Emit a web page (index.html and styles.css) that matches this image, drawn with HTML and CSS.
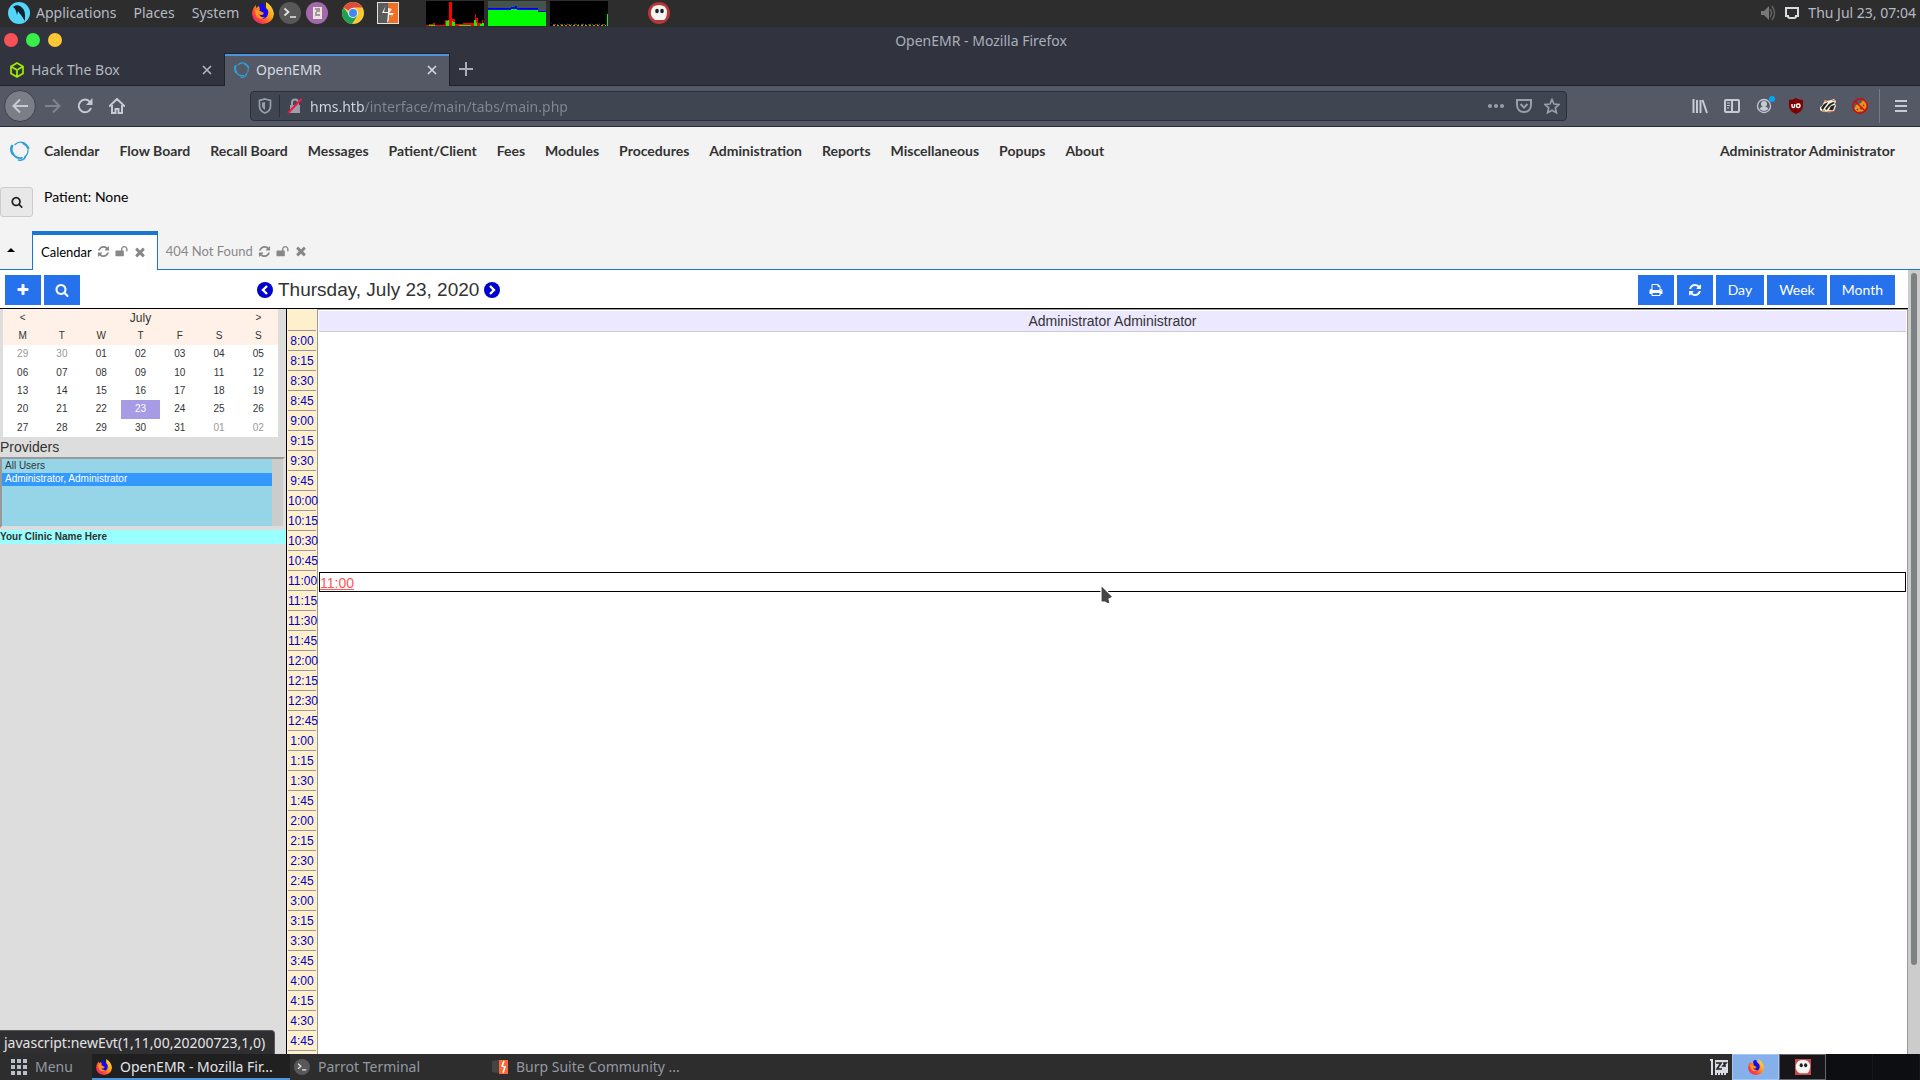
FILE: index.html
```html
<!DOCTYPE html>
<html lang="en">
<head>
<meta charset="utf-8">
<title>OpenEMR</title>
<link rel="stylesheet" href="styles.css">
</head>
<body>
<svg class="defs" aria-hidden="true">
  <symbol id="refresh" viewBox="0 0 1792 1792"><path d="M1639 1056q0 5-1 7-64 268-268 434.500t-478 166.500q-146 0-282.500-55t-243.500-157l-129 129q-19 19-45 19t-45-19-19-45v-448q0-26 19-45t45-19h448q26 0 45 19t19 45-19 45l-137 137q71 66 161 102t187 36q134 0 250-65t186-179q11-17 53-117 8-23 30-23h192q13 0 22.500 9.500t9.500 22.500zm25-800v448q0 26-19 45t-45 19h-448q-26 0-45-19t-19-45 19-45l138-138q-148-137-349-137-134 0-250 65t-186 179q-11 17-53 117-8 23-30 23h-199q-13 0-22.500-9.500t-9.500-22.500v-7q65-268 270-434.500t480-166.500q146 0 284 55.500t245 156.500l130-129q19-19 45-19t45 19 19 45z"/></symbol>
  <symbol id="search" viewBox="0 0 1792 1792"><path d="M1216 832q0-185-131.500-316.500t-316.500-131.500-316.500 131.500-131.500 316.500 131.500 316.500 316.500 131.500 316.500-131.500 131.500-316.500zm512 832q0 52-38 90t-90 38q-54 0-90-38l-343-342q-179 124-399 124-143 0-273.500-55.500t-225-150-150-225-55.500-273.500 55.500-273.500 150-225 225-150 273.500-55.500 273.500 55.500 225 150 150 225 55.500 273.500q0 220-124 399l343 343q37 37 37 90z"/></symbol>
  <symbol id="plus" viewBox="0 0 1792 1792"><path d="M1600 736v192q0 40-28 68t-68 28h-416v416q0 40-28 68t-68 28h-192q-40 0-68-28t-28-68v-416h-416q-40 0-68-28t-28-68v-192q0-40 28-68t68-28h416v-416q0-40 28-68t68-28h192q40 0 68 28t28 68v416h416q40 0 68 28t28 68z"/></symbol>
  <symbol id="times" viewBox="0 0 1792 1792"><path d="M1490 1322q0 40-28 68l-136 136q-28 28-68 28t-68-28l-294-294-294 294q-28 28-68 28t-68-28l-136-136q-28-28-28-68t28-68l294-294-294-294q-28-28-28-68t28-68l136-136q28-28 68-28t68 28l294 294 294-294q28-28 68-28t68 28l136 136q28 28 28 68t-28 68l-294 294 294 294q28 28 28 68z"/></symbol>
  <symbol id="print" viewBox="0 0 1792 1792"><path d="M448 1536h896v-256h-896v256zm0-640h896v-384h-160q-40 0-68-28t-28-68v-160h-640v640zm1152 64q0-26-19-45t-45-19-45 19-19 45 19 45 45 19 45-19 19-45zm128 0v416q0 13-9.500 22.500t-22.500 9.500h-224v160q0 40-28 68t-68 28h-960q-40 0-68-28t-28-68v-160h-224q-13 0-22.500-9.500t-9.500-22.500v-416q0-79 56.500-135.500t135.500-56.500h64v-544q0-40 28-68t68-28h672q40 0 88 20t76 48l152 152q28 28 48 76t20 88v256h64q79 0 135.500 56.500t56.500 135.500z"/></symbol>
  <symbol id="unlock" viewBox="0 0 1792 1792"><path d="M1728 576v256q0 26-19 45t-45 19h-64q-26 0-45-19t-19-45v-256q0-106-75-181t-181-75-181 75-75 181v192h96q40 0 68 28t28 68v576q0 40-28 68t-68 28h-960q-40 0-68-28t-28-68v-576q0-40 28-68t68-28h672v-192q0-185 131.500-316.500t316.500-131.500 316.500 131.500 131.500 316.500z"/></symbol>
  <symbol id="close" viewBox="0 0 10 10"><path d="M1 1l8 8M9 1l-8 8" stroke="currentColor" stroke-width="1.600" fill="none"/></symbol>
  <symbol id="emr" viewBox="0 0 20 20"><g fill="none" stroke="#2f9fd8" stroke-linecap="round"><path d="M5 3.500A8 8 0 0 1 14 2" stroke-width="1.400"/><path d="M13.500 2.300A8 8 0 0 1 18.200 7" stroke-width="2.400"/><path d="M18 8.500A8.500 8.500 0 0 1 14.500 16" stroke-width="1.200"/><path d="M2 5A8.500 8.500 0 0 0 2.800 13" stroke-width="2.600"/><path d="M2.800 12.500A8.500 8.500 0 0 0 12 16.800" stroke-width="1.800"/><path d="M8.500 19Q13.500 20 15.500 16" stroke-width="1.600"/></g></symbol>
  <symbol id="firefox" viewBox="0 0 22 22"><defs><linearGradient id="fx" x1="1" y1="0" x2="0" y2="1"><stop offset="0" stop-color="#fff44f"/><stop offset=".4" stop-color="#ffa018"/><stop offset=".72" stop-color="#ff3e3e"/><stop offset="1" stop-color="#d815b0"/></linearGradient></defs><path d="M14 0Q21 4 22 12Q21 21 11 22Q1 21 0 12Q0 7 4 3V6L7 4Q11 4 14 9Z" fill="url(#fx)"/><path d="M7 4Q8 0 12 2Q11 5 14 6Q17 8 16 12Q15 16 11 17Q6 16 6 13Q9 14 12 12L7 11Q5 9 8 8Z" fill="#1508ef"/><path d="M3 8Q6 7 8 9L12 11Q9 14 6 11Q8 16 13 15Q9 19 5 15Q3 12 3 8Z" fill="#ff9b18"/></symbol>
  <symbol id="terminal" viewBox="0 0 22 22"><circle cx="11" cy="11" r="11" fill="#585858"/><path d="M5.500 6.500l4 3.500-4 3.500M11 15h6" fill="none" stroke="#e6e6e6" stroke-width="1.700"/></symbol>
  <symbol id="skull" viewBox="0 0 24 24"><path d="M4 10Q5 4 12 4Q19 4 20 10Q20 17 17 19H8Q3 16 4 10Z" fill="#f4f4f2"/><ellipse cx="10" cy="10" rx="1.800" ry="2.200" fill="#222"/><ellipse cx="15" cy="10" rx="1.800" ry="2.200" fill="#222"/></symbol>
</svg>

<header class="panel">
  <button class="panel-item menu-apps"><svg width="22" height="22" viewBox="0 0 22 22"><circle cx="11" cy="11" r="11" fill="#55d4fa"/><path d="M5 5Q8 2 12 4Q17 7 17 13L17 19L13 13Q11 11 10 9L9 13L8 9Q7 6 5 5Z" fill="#10202a"/></svg>Applications</button>
  <button class="panel-item">Places</button>
  <button class="panel-item">System</button>
  <div class="launchers">
    <button aria-label="Firefox"><svg width="22" height="22"><use href="#firefox"/></svg></button>
    <button aria-label="Terminal"><svg width="22" height="22"><use href="#terminal"/></svg></button>
    <button aria-label="Text editor"><svg width="22" height="22" viewBox="0 0 22 22"><circle cx="11" cy="11" r="11" fill="#a468ae"/><path d="M7 5h9v12H7z" fill="#e9e4da"/><path d="M9 7h5M10 9h4M9 11h2M9 13h5" stroke="#8d7b8f" stroke-width="1.400"/></svg></button>
  </div>
  <div class="launchers launchers-wide">
    <button aria-label="Chrome"><svg width="22" height="22" viewBox="0 0 22 22"><circle cx="11" cy="11" r="11" fill="#fcc934"/><path d="M11 11L1.500 5.500A11 11 0 0 1 20.500 5.500H11Z" fill="#dd4b3e"/><path d="M1.500 5.500A11 11 0 0 0 10 22L15.500 13.500L7 13Z" fill="#1ba05a"/><circle cx="11" cy="11" r="5" fill="#eee"/><circle cx="11" cy="11" r="4" fill="#4486f4"/></svg></button>
    <button aria-label="Burp Suite"><svg width="22" height="22" viewBox="0 0 22 22"><path d="M0 0h22v22H0z" fill="#e8e2dc"/><path d="M1 1h10v20H1z" fill="#585c5f"/><path d="M11 1h10v20H11z" fill="#ee6f28"/><path d="M10 1L5 11H11L10 21L17 11H12L15 7L11 6V1Z" fill="#fff1e8"/><path d="M9 1L7 10H11V1Z" fill="#585c5f"/><path d="M12 21V13H15L12 21Z" fill="#ee6f28"/></svg></button>
  </div>
  <div class="monitors">
    <svg width="58" height="25" viewBox="0 0 58 25"><path fill="#000" d="M0 0h58v25H0z"/><path fill="#f00" d="M0 24h3v-1h4v-1h2v2h10v-5h4V1h3v17h3v5h8v-1h12v-9h1v4h2v5h4v-3h1v6H0z"/><path fill="#0f0" d="M3 25v-1h6v1zM20 25v-5h2v-1h1v6zM26 25v-5h1v1h2v4zM33 25v-1h12v1zM48 25v-6h2v3h1v3zM54 25v-2h2v-1h2v3z"/></svg>
    <svg width="58" height="25" viewBox="0 0 58 25"><path fill="#44544c" d="M0 0h58v25H0z"/><path fill="#00f" d="M0 7h23v-1h4v-1h2v2h21v3h8v2H0z"/><path fill="#0f0" d="M0 9h23v-1h6v1h21v2h8v14H0z"/></svg>
    <svg width="58" height="25" viewBox="0 0 58 25"><path fill="#000" d="M0 0h58v25H0z"/><path stroke="#f00" stroke-dasharray="3 1 1 2" d="M3 23.500h53"/><path stroke="#00f" stroke-dasharray="1 7" d="M1 22.500h56"/><path stroke="#0f0" stroke-dasharray="2 2" d="M3 24.500h53"/><path fill="#0f0" d="M57 13h1v12h-1z"/></svg>
  </div>
  <button class="indicator" aria-label="Skull indicator"><svg width="24" height="24" viewBox="0 0 24 24"><circle cx="12" cy="12" r="11" fill="#b83636"/><use href="#skull"/></svg></button>
  <div class="tray">
    <svg width="16" height="16" viewBox="0 0 16 16"><path d="M1 6h3l5-5v14l-5-5H1z" fill="#777"/><path d="M10 4q3 4 0 8M12 1q5 7 0 14" fill="none" stroke="#626262" stroke-width="1.500"/></svg>
    <svg width="16" height="14" viewBox="0 0 16 14"><path d="M2 2h12v8h-2q0 2-2 2H6q-2 0-2-2H2z" fill="none" stroke="#d6dce2" stroke-width="2"/></svg>
    <time>Thu Jul 23, 07:04</time>
  </div>
</header>

<section class="window">
  <div class="titlebar">
    <div class="lights"><button class="light red" aria-label="Close"></button><button class="light green" aria-label="Maximize"></button><button class="light yellow" aria-label="Minimize"></button></div>
    <div class="window-title">OpenEMR - Mozilla Firefox</div>
  </div>
  <div class="browser-tabs">
    <div class="btab">
      <svg width="16" height="16" viewBox="0 0 16 16"><path d="M8 1l6 3.500v7L8 15l-6-3.500v-7zM2 4.500L8 8l6-3.500M8 8v7" fill="none" stroke="#9fef00" stroke-width="1.700" stroke-linejoin="round"/></svg>
      <span>Hack The Box</span>
      <button aria-label="Close tab"><svg width="10" height="10"><use href="#close"/></svg></button>
    </div>
    <div class="btab btab-active">
      <svg width="16" height="16"><use href="#emr"/></svg>
      <span>OpenEMR</span>
      <button aria-label="Close tab"><svg width="10" height="10"><use href="#close"/></svg></button>
    </div>
    <button class="new-tab" aria-label="New tab"><svg width="14" height="14" viewBox="0 0 14 14"><path d="M7 0v14M0 7h14" stroke="currentColor" stroke-width="2"/></svg></button>
  </div>
  <nav class="toolbar">
    <button class="back" aria-label="Back"><svg width="16" height="16" viewBox="0 0 16 16"><path d="M16 8H1M8 1.500L1.500 8L8 14.500" fill="none" stroke="currentColor" stroke-width="2"/></svg></button>
    <button class="tool dim" aria-label="Forward"><svg width="16" height="16" viewBox="0 0 16 16"><path d="M0 8h15M8 1.500L14.500 8L8 14.500" fill="none" stroke="currentColor" stroke-width="2"/></svg></button>
    <button class="tool" aria-label="Reload"><svg width="16" height="16" viewBox="0 0 16 16"><path d="M13 4A6.300 6.300 0 1 0 14 10" fill="none" stroke="currentColor" stroke-width="2"/><path d="M15.500 0v7H9z" fill="currentColor"/></svg></button>
    <button class="tool" aria-label="Home"><svg width="16" height="16" viewBox="0 0 16 16"><path d="M0 8.500L8 1l8 7.500M3 7v8h3.500v-4h3v4H13V7" fill="none" stroke="currentColor" stroke-width="2"/></svg></button>
    <div class="urlbar">
      <svg width="14" height="16" viewBox="0 0 14 16"><path d="M7 1l5.500 1.500V8q0 5-5.500 7q-5.500-2-5.500-7V2.500z" fill="none" stroke="currentColor" stroke-width="1.700"/><path d="M7 4v8q-3-1.500-3-4V4.800z" fill="currentColor"/></svg>
      <i class="url-sep"></i>
      <svg width="16" height="16" viewBox="0 0 16 16"><path d="M3 7h10v8H3z" fill="currentColor"/><path d="M5 8V4.500q0-3 3-3t3 3V8" fill="none" stroke="currentColor" stroke-width="2"/><path d="M1 15L14.500 1" stroke="#f5163f" stroke-width="2"/></svg>
      <input class="url" aria-label="Address" value="hms.htb/interface/main/tabs/main.php">
      <div class="url-actions">
        <svg width="16" height="16" viewBox="0 0 16 16"><g fill="currentColor"><circle cx="2" cy="8" r="2"/><circle cx="8" cy="8" r="2"/><circle cx="14" cy="8" r="2"/></g></svg>
        <svg width="16" height="16" viewBox="0 0 16 16"><path d="M1 2h14v5q-.5 7-7 7T1 7zM4.500 6L8 9.500L11.500 6" fill="none" stroke="currentColor" stroke-width="2"/></svg>
        <svg width="16" height="16" viewBox="0 0 16 16"><path d="M8 1.500l2 4.500 5 .5-3.700 3.300 1.100 4.900L8 12.200l-4.400 2.500 1.100-4.900L1 6.500 6 6z" fill="none" stroke="currentColor" stroke-width="1.700"/></svg>
      </div>
    </div>
    <div class="extensions">
      <svg width="16" height="16" viewBox="0 0 16 16"><path d="M1.500 1v14M5 2v13M8.500 2v13M10.500 2l4.500 13" stroke="currentColor" stroke-width="2" fill="none"/></svg>
      <svg width="16" height="16" viewBox="0 0 16 16"><rect x="1" y="2" width="14" height="12" rx="1" fill="none" stroke="currentColor" stroke-width="2"/><path d="M8 2v12" stroke="currentColor" stroke-width="2"/><path d="M3 5h3M3 7.500h3M3 10h2" stroke="currentColor" stroke-width="1.200"/></svg>
      <svg class="account" width="20" height="20" viewBox="0 0 20 20"><circle cx="8" cy="12" r="6.500" fill="none" stroke="currentColor" stroke-width="1.300"/><circle cx="8" cy="10" r="3" fill="currentColor"/><path d="M3.500 15q1-2.500 4.500-2.500t4.500 2.500q-4.500 4-9 0z" fill="currentColor"/><circle cx="16" cy="5" r="3" fill="#00a8f3"/></svg>
      <svg width="16" height="16" viewBox="0 0 16 16"><path d="M8 0q3 2 7 2v6q0 5-7 8q-7-3-7-8V2q4 0 7-2z" fill="#800000"/><path d="M4 6v2q0 1.500 1.300 1.500T6.600 8V6" fill="none" stroke="#fff" stroke-width="1.400"/><rect x="8.500" y="6" width="3.500" height="3.500" rx="1.500" fill="none" stroke="#fff" stroke-width="1.400"/></svg>
      <svg width="16" height="16" viewBox="0 0 16 16"><path d="M0 9L2 8L4 4L5 2L7 3L11 2L14 1L16 3L15 6L16 8L14 13L3 14L0 12Z" fill="#f3eee2"/><path d="M1 10L4 6L8 4L7 6L4 10L3 12ZM5 11L9 6L13 4L15 5L11 7L8 10L7 12ZM9 12l2-4 4-1-2 5z" fill="#222"/><path d="M4 3l3 0M12 2l3 1M2 13h3M8 14l5-1" stroke="#e27e35" stroke-width="1.300"/></svg>
      <svg width="16" height="16" viewBox="0 0 16 16"><path d="M2 11L4 7L9 5L11 2L14 4L15 9L12 13L5 14Z" fill="#f0901c"/><path d="M5 11l1 1M11 7l1 1M8 10l2 1" stroke="#7a3810" stroke-width="1.500"/><circle cx="8" cy="8" r="7.200" fill="none" stroke="#d10909" stroke-width="1.400"/><path d="M3 3l10 10" stroke="#d10909" stroke-width="1.400"/></svg>
    </div>
    <button class="burger" aria-label="Open menu"><svg width="12" height="12" viewBox="0 0 12 12"><path d="M0 1h12M0 6h12M0 11h12" stroke="currentColor" stroke-width="2"/></svg></button>
  </nav>

  <div class="page">
    <div class="emr-head">
      <nav class="emr-menu">
        <a href="#" class="emr-logo" aria-label="OpenEMR"><svg width="20" height="20"><use href="#emr"/></svg></a>
        <a href="#">Calendar</a><a href="#">Flow Board</a><a href="#">Recall Board</a><a href="#">Messages</a><a href="#">Patient/Client</a><a href="#">Fees</a><a href="#">Modules</a><a href="#">Procedures</a><a href="#">Administration</a><a href="#">Reports</a><a href="#">Miscellaneous</a><a href="#">Popups</a><a href="#">About</a>
        <a href="#" class="user">Administrator Administrator</a>
      </nav>
      <div class="patient-row">
        <button class="find" aria-label="Find patient"><svg width="12" height="12"><use href="#search"/></svg></button>
        <span>Patient: None</span>
      </div>
      <div class="emr-tabs">
        <button class="caret" aria-label="Collapse"></button>
        <div class="etab etab-active"><span>Calendar</span><svg width="13" height="13"><use href="#refresh"/></svg><svg width="13" height="13"><use href="#unlock"/></svg><svg width="14" height="14"><use href="#times"/></svg></div>
        <div class="etab"><span>404 Not Found</span><svg width="13" height="13"><use href="#refresh"/></svg><svg width="13" height="13"><use href="#unlock"/></svg><svg width="14" height="14"><use href="#times"/></svg></div>
      </div>
    </div>

    <div class="frame">
      <main class="calendar">
        <div class="cal-bar">
          <div class="cal-left">
            <button class="btn btn-icon" aria-label="Add"><svg width="14" height="14"><use href="#plus"/></svg></button>
            <button class="btn btn-icon" aria-label="Search"><svg width="14" height="14"><use href="#search"/></svg></button>
          </div>
          <div class="cal-date">
            <a href="#" aria-label="Previous day"><svg width="16" height="16" viewBox="0 0 16 16"><circle cx="8" cy="8" r="8" fill="#0000cc"/><path d="M10 4L6 8l4 4" fill="none" stroke="#fff" stroke-width="2.400"/></svg></a>
            <span>Thursday, July 23, 2020</span>
            <a href="#" aria-label="Next day"><svg width="16" height="16" viewBox="0 0 16 16"><circle cx="8" cy="8" r="8" fill="#0000cc"/><path d="M6 4l4 4-4 4" fill="none" stroke="#fff" stroke-width="2.400"/></svg></a>
          </div>
          <div class="cal-views">
            <button class="btn btn-icon" aria-label="Print"><svg width="14" height="14"><use href="#print"/></svg></button>
            <button class="btn btn-icon" aria-label="Refresh"><svg width="14" height="14"><use href="#refresh"/></svg></button>
            <button class="btn">Day</button><button class="btn">Week</button><button class="btn">Month</button>
          </div>
        </div>
        <div class="cal-body">
          <aside class="side">
            <table class="mini">
              <thead>
                <tr><th><a href="#">&lt;</a></th><th colspan="5" class="month">July</th><th><a href="#">&gt;</a></th></tr>
                <tr><th>M</th><th>T</th><th>W</th><th>T</th><th>F</th><th>S</th><th>S</th></tr>
              </thead>
              <tbody>
                <tr><td class="off">29</td><td class="off">30</td><td>01</td><td>02</td><td>03</td><td>04</td><td>05</td></tr>
                <tr><td>06</td><td>07</td><td>08</td><td>09</td><td>10</td><td>11</td><td>12</td></tr>
                <tr><td>13</td><td>14</td><td>15</td><td>16</td><td>17</td><td>18</td><td>19</td></tr>
                <tr><td>20</td><td>21</td><td>22</td><td class="today">23</td><td>24</td><td>25</td><td>26</td></tr>
                <tr><td>27</td><td>28</td><td>29</td><td>30</td><td>31</td><td class="off">01</td><td class="off">02</td></tr>
              </tbody>
            </table>
            <label class="providers-label" for="providers">Providers</label>
            <select id="providers" class="providers" multiple size="5"><option>All Users</option><option selected>Administrator, Administrator</option></select>
            <div class="clinic">Your Clinic Name Here</div>
          </aside>
          <div class="times">
            <div class="times-head"></div>
            <a href="#">8:00</a><a href="#">8:15</a><a href="#">8:30</a><a href="#">8:45</a>
            <a href="#">9:00</a><a href="#">9:15</a><a href="#">9:30</a><a href="#">9:45</a>
            <a href="#">10:00</a><a href="#">10:15</a><a href="#">10:30</a><a href="#">10:45</a>
            <a href="#">11:00</a><a href="#">11:15</a><a href="#">11:30</a><a href="#">11:45</a>
            <a href="#">12:00</a><a href="#">12:15</a><a href="#">12:30</a><a href="#">12:45</a>
            <a href="#">1:00</a><a href="#">1:15</a><a href="#">1:30</a><a href="#">1:45</a>
            <a href="#">2:00</a><a href="#">2:15</a><a href="#">2:30</a><a href="#">2:45</a>
            <a href="#">3:00</a><a href="#">3:15</a><a href="#">3:30</a><a href="#">3:45</a>
            <a href="#">4:00</a><a href="#">4:15</a><a href="#">4:30</a><a href="#">4:45</a>
          </div>
          <div class="day">
            <div class="day-head">Administrator Administrator</div>
            <div class="day-slots"><a href="#" class="slot">11:00</a></div>
          </div>
        </div>
      </main>
      <div class="scrollbar"><div class="thumb"></div></div>
    </div>
    <div class="status">javascript:newEvt(1,11,00,20200723,1,0)</div>
  </div>
</section>

<footer class="taskbar">
  <button class="start"><svg width="16" height="16" viewBox="0 0 16 16"><path d="M0 2h16M0 8h16M0 14h16" stroke="#b9bec8" stroke-width="4" stroke-dasharray="4 2"/></svg>Menu</button>
  <button class="task task-active"><svg width="16" height="16"><use href="#firefox"/></svg><span>OpenEMR - Mozilla Fir...</span></button>
  <button class="task"><svg width="16" height="16"><use href="#terminal"/></svg><span>Parrot Terminal</span></button>
  <button class="task"><svg width="16" height="16" viewBox="0 0 16 16"><path d="M0 2l7-1v13l-7-1z" fill="#444"/><path d="M7 1h9v14H7z" fill="#ff6633"/><path d="M12 2l-2 5 3 1-2 6" fill="none" stroke="#fff" stroke-width="1.600"/></svg><span>Burp Suite Community ...</span></button>
  <div class="workspaces">
    <svg class="zz" width="18" height="16" viewBox="0 0 18 16"><path d="M0 0h3v16H1V2H0zM5 1h13v13h-2v2h-2v-2h-1v2h-2v-2h-1v2H8v-2H7v2H5z" fill="#d9dce4"/><path d="M6 4h5l-4 6h5M13 4h3l-3 3h3" fill="none" stroke="#222" stroke-width="1.600"/></svg>
    <button class="ws ws-current" aria-label="Workspace 1"><svg width="16" height="16"><use href="#firefox"/></svg></button>
    <button class="ws ws-window" aria-label="Workspace 2"><svg width="16" height="16" viewBox="3 3 18 18"><path d="M3 3h18v18H3z" fill="#c94a4a"/><use href="#skull" width="24" height="24"/></svg></button>
    <button class="ws" aria-label="Workspace 3"></button>
    <button class="ws" aria-label="Workspace 4"></button>
  </div>
</footer>
<svg class="pointer" width="14" height="22" viewBox="0 0 14 22"><path d="M1 1v17h4l3 2 2-1-1-4 4-2z" fill="#444" stroke="#fff" stroke-width="1.200"/></svg>
</body>
</html>
```
FILE: styles.css
```css
* { box-sizing: border-box; }
body {
  margin: 0;
  height: 100vh;
  display: flex;
  flex-direction: column;
  overflow: hidden;
  position: relative;
  font-family: "Noto Sans", sans-serif;
  font-size: 14px;
  line-height: 20px;
  color: #b5bac4;
  background: #2d2d2d;
}
button {
  margin: 0;
  padding: 0;
  border: 0;
  background: none;
  color: inherit;
  font: inherit;
}
a { color: inherit; text-decoration: none; }
svg { display: block; flex: none; fill: currentColor; }
.defs { position: absolute; width: 0; height: 0; }

/* Desktop panel */
.panel {
  flex: none;
  height: 27px;
  display: flex;
  align-items: center;
  padding: 0 4px 1px 8px;
  background: #2d2d2d;
}
.panel-item { margin-right: 17px; }
.menu-apps { display: flex; align-items: center; gap: 6px; }
.launchers { display: flex; gap: 5px; margin-left: -4px; }
.launchers-wide { gap: 13px; margin-left: 14px; }
.monitors { display: flex; gap: 4px; margin-left: 27px; }
.indicator { margin-left: 39px; }
.tray { display: flex; align-items: center; gap: 8px; margin-left: auto; }

/* Browser window */
.window {
  flex: 1;
  min-height: 0;
  display: flex;
  flex-direction: column;
  background: #31343f;
}
.titlebar { flex: none; height: 26px; display: flex; align-items: center; }
.lights { display: flex; gap: 8px; padding-left: 4px; }
.light { width: 14px; height: 14px; border-radius: 50%; }
.red { background: #fa5057; }
.green { background: #38ef49; }
.yellow { background: #fdc636; }
.window-title { flex: 1; padding: 2px 20px 0 0; text-align: center; color: #a9afba; }
.browser-tabs {
  flex: none;
  height: 33px;
  display: flex;
  border-bottom: 1px solid #20222b;
  color: #b1b6c0;
}
.btab {
  width: 224px;
  display: flex;
  align-items: center;
  gap: 6px;
  padding: 2px 12px 0 9px;
}
.btab button { margin-left: auto; }
.btab-active {
  width: 226px;
  height: 33px;
  border: 1px solid #20222b;
  border-width: 1px 1px 0;
  padding-top: 0;
  background: #555965;
  box-shadow: inset 0 2px #4f94e0;
  color: #d6d9e0;
}
.new-tab { margin-left: 9px; color: #a9b0bc; }
.toolbar {
  flex: none;
  height: 41px;
  display: flex;
  align-items: center;
  padding: 0 13px 0 4px;
  border-bottom: 1px solid #292b38;
  background: #555965;
  color: #c6cad4;
}
.back {
  width: 32px;
  height: 32px;
  display: grid;
  place-items: center;
  border: 1px solid #3c404c;
  border-radius: 50%;
  background: #7b7e87;
}
.tool { margin-left: 16px; }
.back + .tool { margin-left: 9px; }
.dim { color: #80848f; }
.urlbar {
  flex: 1;
  height: 30px;
  display: flex;
  align-items: center;
  gap: 7px;
  margin-left: 125px;
  padding: 0 6px 0 7px;
  border: 1px solid #2c2e3b;
  border-radius: 4px;
  background: #404552;
  color: #9a9fac;
}
.url-sep { width: 1px; height: 22px; background: #2c2e3b; }
.url {
  flex: 1;
  height: 24px;
  padding: 0;
  border: 0;
  font: inherit;
  color: transparent;
  background: linear-gradient(90deg, #d6dae3 54px, #828794 54px);
  background-clip: text;
}
.url-actions { display: flex; gap: 12px; }
.extensions { display: flex; align-items: center; gap: 16px; margin-left: 125px; }
.account { width: 20px; margin: -4px -4px 0 0; }
.burger {
  height: 34px;
  margin-left: 11px;
  padding-left: 15px;
  border-left: 1px solid #777b86;
}

/* OpenEMR */
.page {
  flex: 1;
  min-height: 0;
  display: flex;
  flex-direction: column;
  position: relative;
  background: #fff;
  color: #333;
}
.emr-head {
  flex: none;
  background: #f3f3f3;
  border-bottom: 1px solid #1976d2;
  font-family: Lato, sans-serif;
}
.emr-menu {
  height: 60px;
  display: flex;
  align-items: center;
  gap: 20px;
  padding: 0 25px 12px 10px;
  font-weight: 700;
}
.emr-logo { margin-right: -6px; }
.user { margin-left: auto; }
.patient-row { height: 44px; display: flex; gap: 11px; color: #000; }
.find {
  width: 33px;
  height: 30px;
  display: grid;
  place-items: center;
  border: 1px solid #ccc;
  border-radius: 3px;
  background: #e8e8e8;
  color: #222;
}
.emr-tabs { display: flex; height: 38px; font-size: 13px; }
.caret { width: 32px; }
.caret::before {
  content: "";
  display: block;
  width: 0;
  margin-left: 7px;
  border: 4px solid transparent;
  border-top: 0;
  border-bottom-color: #000;
}
.etab {
  display: flex;
  align-items: center;
  gap: 5px;
  padding: 2px 10px 0 8px;
  color: #888;
}
.etab-active {
  height: 39px;
  border: 1px solid #1976d2;
  border-width: 4px 1px 0;
  padding: 0 10px 2px 8px;
  background: #fff;
}
.etab-active span { color: #000; }

.frame { flex: 1; min-height: 0; display: flex; }
.scrollbar { width: 12px; padding: 3px; background: #ccc; }
.thumb { height: 89%; border-radius: 3px; background: #7e8181; }
.calendar {
  flex: 1;
  min-width: 0;
  display: flex;
  flex-direction: column;
  font-family: "Liberation Sans", sans-serif;
}
.cal-bar {
  flex: none;
  height: 39px;
  display: flex;
  align-items: center;
  padding: 1px 13px 0 5px;
  border-bottom: 1px solid #000;
}
.cal-left, .cal-views { display: flex; gap: 3px; }
.cal-left { width: 252px; }
.cal-views { margin-left: auto; }
.btn {
  height: 30px;
  padding: 0 12px;
  background: #2672ec;
  color: #fff;
  font-family: Lato, sans-serif;
}
.btn-icon { padding: 0 11px; }
.cal-date { display: flex; align-items: center; gap: 5px; font-size: 19px; }
.cal-body { flex: 1; min-height: 0; display: flex; overflow: hidden; }
.side {
  width: 287px;
  border-right: 1px solid #000;
  background: #ddd;
  font-size: 10px;
}
.mini {
  width: 275px;
  height: 128px;
  margin-left: 3px;
  table-layout: fixed;
  border-collapse: collapse;
  background: #fff;
  text-align: center;
  line-height: 18px;
}
.mini thead { background: #fff1e8; }
.mini th { padding: 0; font-weight: 400; }
.mini td { padding: 0; }
.mini .month { font-size: 12px; }
.off { color: #999; }
.today { background: #a79be6; color: #fff; }
.providers-label { display: block; font-size: 14px; line-height: 20px; }
.providers {
  display: block;
  width: 285px;
  height: 71px;
  padding: 1px 0 0;
  border: 2px solid #ddd;
  border-color: #999 #ddd #ddd #999;
  border-radius: 0;
  background: linear-gradient(270deg, #ccc 11px, #95d5e7 11px);
  color: #333;
  font: 10px "Liberation Sans", sans-serif;
  overflow: hidden;
  outline: 0;
}
.providers option { margin-right: 11px; min-height: 13px; padding: 0 3px; line-height: 13px; }
.providers option:checked { background: #3399ff linear-gradient(#3399ff, #3399ff); color: #fff; }
.clinic { margin-top: 2px; background: #9ff; font-weight: 700; line-height: 14px; }
.times {
  width: 31px;
  padding: 0 1px;
  border-right: 1px solid #999;
  background: #fff0cd;
  color: #0000cc;
  font-size: 12px;
  text-align: center;
}
.times a { display: block; height: 20px; border-bottom: 1px solid #999; }
.times-head { height: 22px; border-bottom: 1px solid #999; }
.day {
  flex: 1;
  padding: 1px 1px 0;
  border-top: 1px solid #999;
  border-right: 1px solid #999;
}
.day-head {
  height: 21px;
  border-bottom: 1px solid #ccc;
  background: #ebe8ff;
  text-align: center;
}
.day-slots { padding-top: 240px; }
.slot {
  display: block;
  height: 20px;
  border: 1px solid #000;
  color: #ff5555;
  text-decoration: underline;
}
.status {
  position: absolute;
  left: 0;
  bottom: 0;
  padding: 2px 9px 1px 4px;
  border: 1px solid #55555a;
  border-width: 1px 1px 0 0;
  border-radius: 0 4px 0 0;
  background: #2f2f32;
  color: #e4e4e4;
}

/* Taskbar */
.taskbar {
  flex: none;
  height: 26px;
  display: flex;
  background: #2d2d2d;
  color: #9299a2;
}
.start { width: 92px; display: flex; align-items: center; gap: 8px; padding-left: 11px; }
.task {
  width: 198px;
  display: flex;
  align-items: center;
  gap: 8px;
  padding-left: 4px;
}
.task-active { background: #202020; box-shadow: inset 0 -2px #4f94e0; color: #e2e5e9; }
.workspaces { display: flex; margin-left: auto; }
.zz { align-self: center; margin-right: 4px; }
.ws {
  width: 47px;
  display: grid;
  place-items: center;
  border-right: 1px solid #16181d;
  background: #0d0e12;
}
.ws-current { border: 1px solid #a3c6f5; background: #86b0ea; }
.ws-window { border: 1px solid #66676d; background: #15151a; }
.pointer { position: absolute; left: 1100px; top: 584px; }
```
